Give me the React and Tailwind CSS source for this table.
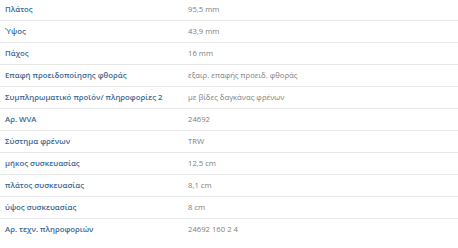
const ROWS = [
  ['Πλάτος', '95,5 mm'],
  ['Ύψος', '43,9 mm'],
  ['Πάχος', '16 mm'],
  ['Επαφή προειδοποίησης φθοράς', 'εξαιρ. επαφής προειδ. φθοράς'],
  ['Συμπληρωματικό προϊόν/ πληροφορίες 2', 'με βίδες δαγκάνας φρένων'],
  ['Αρ. WVA', '24692'],
  ['Σύστημα φρένων', 'TRW'],
  ['μήκος συσκευασίας', '12,5 cm'],
  ['πλάτος συσκευασίας', '8,1 cm'],
  ['ύψος συσκευασίας', '8 cm'],
  ['Αρ. τεχν. πληροφοριών', '24692 160 2 4'],
]

export default function App() {
  return (
    <div className="w-[458px] h-[248px] overflow-hidden bg-white font-['Open_Sans',sans-serif]">
      <div className="-mt-[1px]">
        {ROWS.map(([label, value], idx) => (
          <div
            key={label}
            className={
              'flex h-[22px] items-center ' +
              (idx < ROWS.length - 1 ? 'border-b border-[#e8e8e8]' : '')
            }
          >
            <div className="w-[188px] shrink-0 pl-[5px] text-[7.8px] font-semibold text-[#3a6793]">
              {label}
            </div>
            <div className="text-[7.7px] text-[#808080]">{value}</div>
          </div>
        ))}
      </div>
    </div>
  )
}
